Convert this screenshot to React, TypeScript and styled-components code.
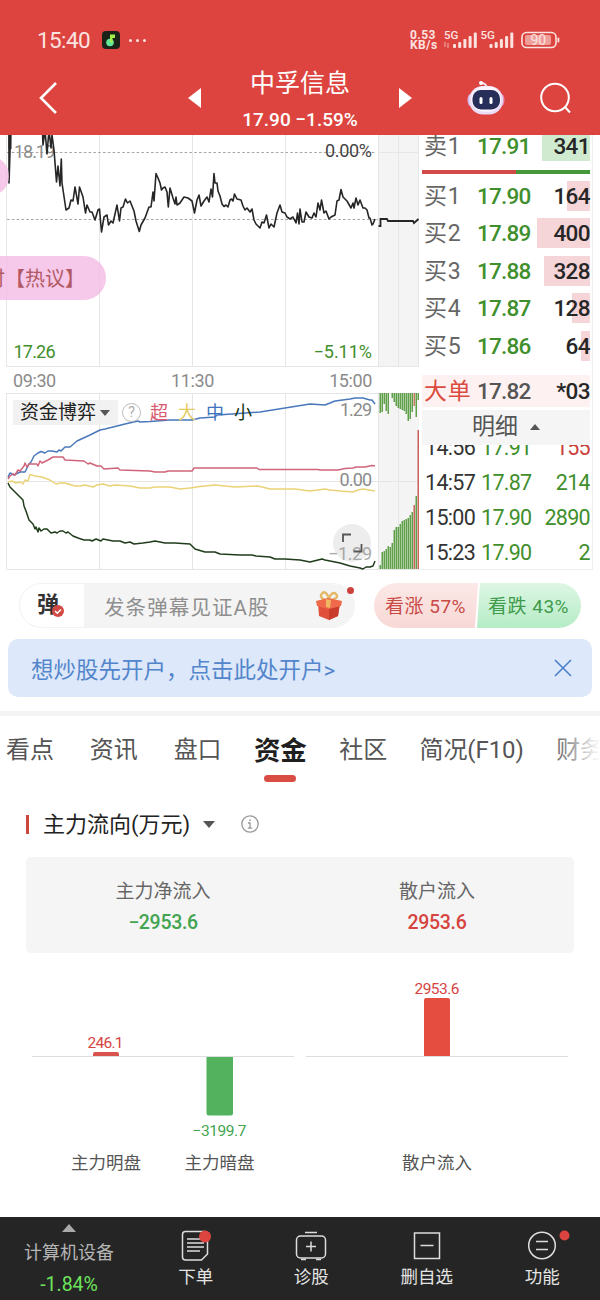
import React from 'react'
import styled, { createGlobalStyle } from 'styled-components'

const font = `Roboto, 'Noto Sans CJK SC', sans-serif`

const red = '#dd4440'
const up = '#d5443f'
const down = '#3f8f2c'

const pricePoints = '9,120 9,183 11,120 42,120 43,145 45,130 47,154 49,130 51,148 52,135 54,150 56.5,182 58,166 60,186 61.3,159 62,183 66,210 69,208 71,200 73,201 75,187 78,204 79.5,187 83,197 85.5,213 87,205 90,212 92,212 95,220 98,210 99.5,209 101.5,232 104,217 107,215 108.5,225 111,221 113,223 117,205 119.5,221 121,208 123,207 125.5,199 127.5,203 130,201 134,211 136,221 139.3,231.5 141,225 145,218 149,207 151,207 153,192 154,201 156,173.5 158,178 160,183 161.5,190 163,188 165,187 167,192 168.3,207 170,188 173,198 175,204 176,197 177,205 180,203 184,197 188,198 192,201 194.5,213 197,200 199,195 201,206 204,201 207,197 209,202 211,189 212.5,197 214,173.5 215,183 217,183 218,191 220,196 222,204 224,206.5 226,205 228,207 230,200 231.5,199 233,201 234.5,194 237,199 241,200 243,206 245,210 247,208 250,212 252,209 254,220 256,224 260,228 262,222 264,223 266.5,215 269,228 271,224 274,227 277,213 280,205 282,212 285,213 287,217 290,219 293,217 296,223 297.5,213 299,224 300,209 302,222 304,222 306,212 309,217 312,218 314,213 316,217 318,203 320,210 321.5,200 324,213 326,211 329,219 331,217 335,215 337,201 339,200 341,189.5 343,197 347,201 351,208 353,203 354,208 356,198 358,205 360,200 363,208 365,208 367,210 369,218 370,218 372,225 373,224 375,219'

const afterPoints = '378.5,226 380.5,226 380.5,219 387,219 388,221 413,221 414,223 418.5,219'

const flowLines = [
  { color: '#4a78bd', points: '8,477 10,473 14,475 20,472 25,472 29,464 31,462 34,456 38,453 41,451.5 45,453 48,451 52,451 57,452 59,450 61,451 65,447 70,447 77,441 90,435 100,430 105,429 113,427 125,424 138,421 140,422 150,421.5 170,420 192,420 200,418 215,417 217,415 232,414 260,412 285,408 310,404 325,405 335,401 350,399 355,398 363,398 370,400 372,400 375,404' },
  { color: '#d0647a', points: '8,479 10,476 13,474 15,475 18,470 20,471 24,466 25,463 27,467 29,464 37,464 38,466 40,461 42,463 48,460 53,457 63,457 65,460 84,461 88,464 90,463 97,466 101,466 104,469 118,468 120,470 150,471 155,472 165,472 168,471 192,471 194,468 257,468 259,469.5 318,469.5 320,470 338,470 345,468.5 353,468 356,467 365,467 372,465.5 375,466' },
  { color: '#ead277', points: '8,482 12,481 16,483 20,482 23,484 25,480 28,481 30,474.5 35,476 42,477 50,480 56,484 60,483 65,483 75,486 80,486 85,485 93,487 97,485 103,484 110,486 115,485 130,486 140,488 150,488 155,487 170,487 180,489 190,488 200,486.5 215,485 235,487 258,486 270,489 295,489 310,491 325,489 330,490 340,491 353,492 358,490 363,489 375,491' },
  { color: '#1f3d1a', points: '8,483 10,487 13,490 17,494 23,500 24,506 26,511 29,520 33,524 35,529 36,527 38,532 39,528 41,531 44,529 47,529 51,533 55,532 57,533 60,531 63,531 66,533 68,532 73,536 78,538 84,540 90,540 92,541 96,539 101,541 103,539 113,541 120,541 125,543 130,542 134,544 143,543 150,542 155,541 165,543 175,543 190,544 195,549 205,552 215,552 220,554 240,555 252,555 256,556 270,557 275,559 285,559 300,560 310,562 322,559 325,560 340,563 350,566 355,567 360,568 363,569 366,567 370,567 373,566 375,561' },
]

const topBars = [413, 412, 404, 411, 414, 0, 398, 402, 406, 408, 409, 410, 411, 414, 421, 419, 412, 406, 417, 400]
const bottomBars = [565, 552, 551, 549, 546, 547, 543, 530, 527, 527, 524, 521, 520, 519, 518, 515, 512, 505, 496, 430]

const bids = [
  { name: '买1', price: '17.90', volume: '164', bar: 23 },
  { name: '买2', price: '17.89', volume: '400', bar: 56 },
  { name: '买3', price: '17.88', volume: '328', bar: 46 },
  { name: '买4', price: '17.87', volume: '128', bar: 18 },
  { name: '买5', price: '17.86', volume: '64', bar: 9 },
]

const deals = [
  { time: '14:56', price: '17.91', volume: '155', rise: true },
  { time: '14:57', price: '17.87', volume: '214' },
  { time: '15:00', price: '17.90', volume: '2890' },
  { time: '15:23', price: '17.90', volume: '2' },
]

const tabs = ['看点', '资讯', '盘口', '资金', '社区', '简况(F10)', '财务']

const StatusIcons = () => (
  <svg width="118" height="28" viewBox="443 26 118 28" fill="#fbe3e0">
    <text x="444" y="38.500" fontSize="11.500" fontWeight="500">5G</text>
    <text x="480.500" y="38.500" fontSize="11.500" fontWeight="500">5G</text>
    <path d="M445 42v5M448 43v5" stroke="#eda19d" strokeWidth="1.200" />
    {[4, 6, 9, 12, 15.5].map((h, i) => (
      <React.Fragment key={h}>
        <rect x={453 + i * 5.2} y={48 - h} width="3" height={h} rx="1" />
        <rect x={489.5 + i * 5.2} y={48 - h} width="3" height={h} rx="1" />
      </React.Fragment>
    ))}
    <rect x="522" y="32.500" width="34" height="15" rx="4.500" fill="none" stroke="#fbe3e0" strokeWidth="1.600" />
    <rect x="525" y="35" width="26" height="10" rx="2" fill="#ef9f9a" />
    <rect x="557.500" y="37.500" width="1.800" height="5" rx="1" />
    <text x="530.500" y="45" fontSize="14">90</text>
  </svg>
)

const Robot = () => (
  <svg width="40" height="38" viewBox="466 78 40 38">
    <path d="M481 82q5 0 6 5" fill="none" stroke="#f4dcec" strokeWidth="2" />
    <circle cx="481" cy="82" r="2" fill="#fff" />
    <ellipse cx="470.500" cy="99" rx="3" ry="6" fill="#d3b5ee" />
    <ellipse cx="501.500" cy="99" rx="3" ry="6" fill="#e58fb4" />
    <rect x="469" y="85" width="34" height="28.500" rx="14" fill="#eadcf8" />
    <rect x="471" y="85.500" width="30" height="25" rx="12" fill="#fbf5ff" />
    <rect x="472.500" y="89" width="27.500" height="19.500" rx="8.500" fill="#262e59" />
    <rect x="479.500" y="96" width="3" height="7" rx="1.500" fill="#fff" />
    <rect x="489.500" y="96" width="3" height="7" rx="1.500" fill="#fff" />
  </svg>
)

const Gift = () => (
  <svg width="28" height="30" viewBox="0 0 28 30">
    <path d="M13 9C8 9 4 6 7 2.500S13 4 14 8c1-4 4-8 7-5s-1 6-7 6z" fill="none" stroke="#e2b765" strokeWidth="2.400" />
    <path d="M3 12l11 4 11-4-2 13-9 4-10-4z" fill="#e0503a" />
    <path d="M14 16l11-4-2 13-9 4z" fill="#c93b2b" />
    <path d="M1 10l12-3 14 3-1 5-12 3L2 15z" fill="#ee6a4a" />
    <path d="M11 8l5 1-1 8-4-1z" fill="#f0b763" />
  </svg>
)

const PriceChart = () => (
  <Chart width="420" height="232" viewBox="0 135 420 232">
    <rect x="378" y="135" width="41" height="231" fill="#f4f4f4" />
    <path d="M6.500 135v231.500H418.500V135M99.500 135v231M192.500 135v231M285.500 135v231M378.500 135v231M398.500 135v231" fill="none" stroke="#e6e6e6" />
    <path d="M378 152.500H419" stroke="#e6e6e6" />
    <path d="M7 152.500H375M7 219.500H378" stroke="#aaa59e" strokeDasharray="2.600 2.200" />
    <text x="14" y="157.500" textLength="41" fill="#8b8b8b">18.19</text>
    <text x="325" y="157" textLength="47" fill="#444">0.00%</text>
    <text x="13.500" y="357.500" textLength="42" fill={down}>17.26</text>
    <text x="313.500" y="357.500" textLength="58.500" fill={down}>−5.11%</text>
    <path d="M10 135v14" stroke="#222" strokeWidth="3" />
    <polyline points={pricePoints} fill="none" stroke="#262626" strokeWidth="1.600" strokeLinejoin="round" />
    <polyline points={afterPoints} fill="none" stroke="#262626" strokeWidth="1.800" />
  </Chart>
)

const FlowChart = () => (
  <Chart width="420" height="177" viewBox="0 393 420 177">
    <rect x="378" y="393" width="41" height="176" fill="#f4f4f4" />
    <path d="M6.500 393.500H419M6.500 569.500H419M6.500 481.500H419M6.500 393v176M99.500 393v176M192.500 393v176M285.500 393v176M378.500 393v176M398.500 393v176" fill="none" stroke="#e6e6e6" />
    {topBars.map((y, i) => y > 0 && (
      <rect key={i} x={379.5 + i * 2} y="393" width="1.500" height={y - 393} fill={i === 17 ? '#c9765c' : '#5f9f48'} />
    ))}
    {bottomBars.map((y, i) => (
      <rect key={i} x={379.5 + i * 2} y={y} width="1.500" height={569 - y} fill={i === 17 || i === 19 ? '#c86157' : '#5f9f48'} />
    ))}
    <text x="340" y="416" textLength="32" fill="#8b8b8b">1.29</text>
    <text x="339.500" y="486" textLength="32.500" fill="#8b8b8b">0.00</text>
    {flowLines.map((line) => (
      <polyline key={line.color} points={line.points} fill="none" stroke={line.color} strokeWidth="1.500" strokeLinejoin="round" />
    ))}
    <circle cx="352" cy="543" r="19" fill="#ebebeb" fillOpacity=".88" />
    <text x="328" y="559.500" textLength="44" fill="#a8a8a8">−1.29</text>
    <path d="M343 542v-7.500h8M353.500 551.500h8V544" fill="none" stroke="#555" strokeWidth="1.800" />
  </Chart>
)

const MoneyChart = () => (
  <MoneySvg width="600" height="264" viewBox="0 953 600 264" textAnchor="middle">
    <path d="M32 1056.500H294M306 1056.500H568" stroke="#dedede" />
    <path d="M93 1056v-2q0-2 2-2h22q2 0 2 2v2z" fill="#d9544c" />
    <path d="M206.500 1057h26.500v56q0 2.500-2.500 2.500h-21.500q-2.500 0-2.500-2.500z" fill="#52b25d" />
    <path d="M424 1056v-56q0-2 2-2h22q2 0 2 2v56z" fill="#e54d40" />
    <text x="105.500" y="1047.500" textLength="36" fontSize="15.500" fill={up}>246.1</text>
    <text x="219.500" y="1135.500" textLength="54" fontSize="15.500" fill="#43a450">−3199.7</text>
    <text x="437" y="994" textLength="45" fontSize="15.500" fill={up}>2953.6</text>
    <text x="106" y="1168.500" fontSize="17.500" fill="#555">主力明盘</text>
    <text x="219.500" y="1168.500" fontSize="17.500" fill="#555">主力暗盘</text>
    <text x="437" y="1168.500" fontSize="17.500" fill="#555">散户流入</text>
  </MoneySvg>
)

const App = () => {
  return (
    <Page>
      <GlobalStyle />
      <Header>
        <StatusBar>
          <Clock>15:40</Clock>
          <svg width="18" height="18" viewBox="0 0 18 18">
            <rect width="18" height="18" rx="4" fill="#1b2319" />
            <circle cx="8" cy="11.500" r="3.800" fill="#62e79a" />
            <path d="M8 11V3.500h5v3.500h-2.500v5z" fill="#a6f04c" />
          </svg>
          <Dots><i /><i /><i /></Dots>
          <Speed>0.53<br />KB/s</Speed>
          <StatusIcons />
        </StatusBar>
        <NavBar>
          <svg width="20" height="34" viewBox="0 0 20 34">
            <path d="M18 2L3 17l15 15" fill="none" stroke="#fff" strokeWidth="2.600" />
          </svg>
          <Stock>
            <svg width="13" height="20" viewBox="0 0 13 20"><path d="M13 0v20L0 10z" fill="#fff" /></svg>
            <StockName>
              <h1>中孚信息</h1>
              <p>17.90 −1.59%</p>
            </StockName>
            <svg width="13" height="20" viewBox="0 0 13 20"><path d="M0 0v20l13-10z" fill="#fff" /></svg>
          </Stock>
          <Tools>
            <Robot />
            <svg width="32" height="32" viewBox="0 0 32 32" fill="none" stroke="#fff" strokeWidth="2">
              <circle cx="15" cy="15.500" r="13.800" />
              <path d="M25 25l5 5.500" />
            </svg>
          </Tools>
        </NavBar>
      </Header>

      <Quote>
        <Charts>
          <PriceChart />
          <Bubble $top={21} $height={40} $right={9} />
          <Bubble $top={121} $height={44} $right={106}>时【热议】</Bubble>
          <TimeAxis>
            <span>09:30</span>
            <span>11:30</span>
            <span>15:00</span>
          </TimeAxis>
          <FlowChart />
          <Legend>
            <LegendSelect>资金博弈<Caret $size={5} /></LegendSelect>
            <Help>?</Help>
            <LegendItem $color="#d95b70">超</LegendItem>
            <LegendItem $color="#e6cb62">大</LegendItem>
            <LegendItem $color="#3f72bf">中</LegendItem>
            <LegendItem $color="#18350f">小</LegendItem>
          </Legend>
        </Charts>

        <Book>
          <AskRow>
            <OrderName>卖1</OrderName>
            <OrderPrice>17.91</OrderPrice>
            <Volume $bar={48} $color="#cfeace">341</Volume>
          </AskRow>
          <Ratio><i /></Ratio>
          {bids.map((bid) => (
            <OrderRow key={bid.name}>
              <OrderName>{bid.name}</OrderName>
              <OrderPrice>{bid.price}</OrderPrice>
              <Volume $bar={bid.bar} $color="#f5d5d7">{bid.volume}</Volume>
            </OrderRow>
          ))}
          <BigOrder>
            <OrderName $color="#dc4b40">大单</OrderName>
            <OrderPrice $color="#555">17.82</OrderPrice>
            <Volume>*03</Volume>
          </BigOrder>
          <Detail>明细<Caret $up $size={5} /></Detail>
          <Deals>
            {deals.map((deal) => (
              <Deal key={deal.time}>
                <DealTime>{deal.time}</DealTime>
                <DealPrice>{deal.price}</DealPrice>
                <DealVolume $rise={deal.rise}>{deal.volume}</DealVolume>
              </Deal>
            ))}
          </Deals>
        </Book>
      </Quote>

      <Social>
        <Danmu>
          <DanmuSwitch>
            弹
            <svg width="12" height="12" viewBox="0 0 12 12">
              <circle cx="6" cy="6" r="6" fill="#d24a43" />
              <path d="M3 6l2.300 2.300L9 4.500" fill="none" stroke="#fff" strokeWidth="1.500" />
            </svg>
          </DanmuSwitch>
          <DanmuInput>
            发条弹幕见证A股
            <Gift />
          </DanmuInput>
          <DanmuDot />
        </Danmu>
        <Vote>
          <Rise>看涨 57%</Rise>
          <Fall>看跌 43%</Fall>
        </Vote>
      </Social>

      <Banner>
        想炒股先开户，点击此处开户&gt;
        <svg width="18" height="18" viewBox="0 0 18 18">
          <path d="M1 1l16 16M17 1L1 17" stroke="#4b7fc9" strokeWidth="1.600" />
        </svg>
      </Banner>

      <Tabs>
        {tabs.map((tab) => <Tab key={tab} $active={tab === '资金'}>{tab}</Tab>)}
      </Tabs>

      <Title>
        主力流向(万元)
        <Caret $size={6} />
        <svg width="18" height="18" viewBox="0 0 18 18" fill="none" stroke="#999" strokeWidth="1.300">
          <circle cx="9" cy="9" r="8.200" />
          <path d="M9 4.200v2M7 8h2v5M6.800 13.200h4.400" />
        </svg>
      </Title>

      <Summary>
        <SummaryItem $color="#43a450">主力净流入<b>−2953.6</b></SummaryItem>
        <SummaryItem $color={up}>散户流入<b>2953.6</b></SummaryItem>
      </Summary>

      <MoneyChart />

      <BottomBar>
        <Sector>
          <Caret $up $size={7} $color="#aaa" />
          <span>计算机设备</span>
          <b>-1.84%</b>
        </Sector>
        <Action>
          <svg width="30" height="32" viewBox="0 0 30 32" fill="none" stroke="#ddd" strokeWidth="1.500">
            <path d="M4.500 1.500h19q3 0 3 3V24l-6 6h-16q-3 0-3-3V4.500q0-3 3-3z" />
            <path d="M6 9h17M6 13h17M6 17h17M6 21h13" />
            <circle cx="24" cy="6.500" r="6" fill={red} stroke="none" />
          </svg>
          下单
        </Action>
        <Action>
          <svg width="32" height="32" viewBox="0 0 32 32" fill="none" stroke="#ddd" strokeWidth="1.500">
            <rect x="1.500" y="6" width="29" height="22" rx="4" />
            <path d="M10 2.500h12M16 11.500v10M11 16.500h10M6 29.500h5M21 29.500h5" />
          </svg>
          诊股
        </Action>
        <Action>
          <svg width="32" height="32" viewBox="0 0 32 32" fill="none" stroke="#ddd" strokeWidth="1.500">
            <rect x="3.500" y="3" width="25" height="25.500" />
            <path d="M9.500 15.500h13" />
          </svg>
          删自选
        </Action>
        <Action>
          <svg width="60" height="32" viewBox="0 0 60 32" fill="none" stroke="#ddd" strokeWidth="1.500">
            <circle cx="30" cy="15.500" r="13.300" />
            <path d="M24 11.500h12M24 19.500h12" />
            <circle cx="52.500" cy="5.500" r="5" fill={red} stroke="none" />
          </svg>
          功能
        </Action>
      </BottomBar>
    </Page>
  )
}

export default App

const GlobalStyle = createGlobalStyle`
  * {
    box-sizing: border-box;
  }
  body {
    margin: 0;
    background: #fff;
  }
  svg {
    display: block;
    flex: none;
  }
`
const Page = styled.div`
  width: 600px;
  height: 1300px;
  overflow: hidden;
  font-family: ${font};
  color: #222;
  white-space: nowrap;
`
const Header = styled.header`
  height: 135px;
  padding-top: 24px;
  background: ${red};
  color: #fff;
`
const StatusBar = styled.div`
  display: flex;
  align-items: center;
  height: 32px;
  padding-left: 37px;
  color: #fbe3e0;
`
const Clock = styled.span`
  width: 65px;
  font-size: 22.5px;
  letter-spacing: -0.6px;
`
const Dots = styled.span`
  display: flex;
  gap: 4px;
  width: 282px;
  padding-left: 9px;
  i {
    width: 3px;
    height: 3px;
    border-radius: 50%;
    background: #fbe3e0;
  }
`
const Speed = styled.span`
  width: 33px;
  margin-left: 8px;
  font-size: 12px;
  line-height: 10.5px;
  font-weight: 700;
  letter-spacing: 0.4px;
`
const NavBar = styled.nav`
  display: flex;
  align-items: center;
  height: 79px;
  padding: 4px 28px 0 38px;
`
const Stock = styled.div`
  display: flex;
  align-items: center;
  justify-content: space-between;
  width: 224px;
  margin: 0 54px 0 130px;
`
const StockName = styled.div`
  text-align: center;
  h1 {
    margin: 0;
    font-size: 25px;
    line-height: 43px;
    font-weight: 400;
  }
  p {
    margin: 0;
    font-size: 19px;
    line-height: 29px;
    font-weight: 500;
  }
`
const Tools = styled.div`
  display: flex;
  align-items: center;
  gap: 34px;
`
const Quote = styled.section`
  display: flex;
  height: 435px;
`
const Charts = styled.div`
  position: relative;
  width: 420px;
  overflow: hidden;
`
const Chart = styled.svg`
  font-family: ${font};
  font-size: 18px;
`
const Bubble = styled.div<{ $top: number, $height: number, $right: number }>`
  position: absolute;
  top: ${({ $top }) => $top}px;
  left: -60px;
  width: ${({ $right }) => $right + 60}px;
  height: ${({ $height }) => $height}px;
  padding-right: 21px;
  border-radius: 22px;
  background: rgba(243, 185, 228, 0.78);
  color: #b25a64;
  font-size: 20px;
  line-height: ${({ $height }) => $height + 2}px;
  text-align: right;
`
const TimeAxis = styled.div`
  display: flex;
  justify-content: space-between;
  height: 26px;
  padding: 0 48px 0 13px;
  color: #8b8b8b;
  font-size: 18px;
  line-height: 28px;
  letter-spacing: -0.4px;
`
const Legend = styled.div`
  position: absolute;
  top: 265px;
  left: 13px;
  display: flex;
  align-items: center;
  height: 25px;
`
const LegendSelect = styled.div`
  display: flex;
  align-items: center;
  justify-content: space-between;
  width: 105px;
  height: 25px;
  padding: 0 8px 0 7px;
  background: rgba(240, 240, 240, 0.9);
  font-size: 19px;
  line-height: 27px;
`
const Help = styled.span`
  width: 19px;
  height: 19px;
  margin: 0 9px 0 4px;
  border: 1.5px solid #bbb;
  border-radius: 50%;
  color: #aaa;
  font-size: 14px;
  line-height: 17px;
  text-align: center;
`
const LegendItem = styled.span<{ $color: string }>`
  width: 28px;
  color: ${({ $color }) => $color};
  font-size: 18px;
  line-height: 25px;
`
const Caret = styled.i<{ $size: number, $up?: boolean, $color?: string }>`
  border: ${({ $size }) => $size}px solid transparent;
  border-${({ $up }) => $up ? 'bottom' : 'top'}: ${({ $size }) => $size + 1}px solid ${({ $color }) => $color || '#555'};
  border-${({ $up }) => $up ? 'top' : 'bottom'}: 0;
`
const Book = styled.div`
  width: 173px;
  padding: 0 2px;
  border-right: 1px solid #eee;
  border-bottom: 1px solid #eee;
  overflow: hidden;
`
const OrderRow = styled.div`
  display: flex;
  align-items: center;
  height: 37.5px;
  padding-left: 2px;
`
const AskRow = styled(OrderRow)`
  margin-top: -8px;
  height: 38px;
`
const OrderName = styled.span<{ $color?: string }>`
  width: 53px;
  padding-top: 2px;
  color: ${({ $color }) => $color || '#666'};
  font-size: 23px;
  line-height: 34px;
  letter-spacing: 0.8px;
`
const OrderPrice = styled.span<{ $color?: string }>`
  width: 60px;
  color: ${({ $color }) => $color || down};
  font-size: 22.5px;
  font-weight: 500;
  letter-spacing: -0.8px;
`
const Volume = styled.span<{ $bar?: number, $color?: string }>`
  flex: 1;
  height: 30px;
  background: linear-gradient(${({ $color }) => $color || 'transparent'}, ${({ $color }) => $color || 'transparent'}) right / ${({ $bar }) => $bar || 0}px 100% no-repeat;
  color: #262626;
  font-size: 22.5px;
  font-weight: 500;
  line-height: 31px;
  letter-spacing: -0.6px;
  text-align: right;
`
const Ratio = styled.div`
  height: 4px;
  margin: 5px 0 3px;
  background: #45993a;
  i {
    display: block;
    width: 94px;
    height: 4px;
    background: #cf4a49;
  }
`
const BigOrder = styled(OrderRow)`
  height: 32px;
  margin-top: 10px;
  background: #fdf1f1;
`
const Detail = styled.div`
  display: flex;
  align-items: center;
  justify-content: center;
  gap: 12px;
  height: 35px;
  margin-top: 3px;
  background: #f5f5f5;
  color: #555;
  font-size: 23px;
  line-height: 36px;
`
const Deals = styled.div`
  height: 124px;
  overflow: hidden;
`
const Deal = styled.div`
  display: flex;
  height: 35.3px;
  padding-left: 3px;
  font-size: 21.5px;
  line-height: 35.3px;
  letter-spacing: -0.7px;
  &:first-child {
    margin-top: -15px;
  }
`
const DealTime = styled.span`
  width: 56px;
  color: #333;
`
const DealPrice = styled.span`
  width: 56px;
  color: ${down};
`
const DealVolume = styled.span<{ $rise?: boolean }>`
  flex: 1;
  color: ${({ $rise }) => $rise ? '#c9403c' : down};
  text-align: right;
`
const Social = styled.div`
  display: flex;
  align-items: center;
  justify-content: space-between;
  height: 45px;
  margin: 13px 19px 11px;
`
const Danmu = styled.div`
  position: relative;
  display: flex;
  width: 336px;
  height: 45px;
  border: 1px solid #f2f2f2;
  border-radius: 23px;
`
const DanmuSwitch = styled.div`
  position: relative;
  width: 64px;
  padding-left: 17px;
  color: #333;
  font-size: 22px;
  line-height: 41px;
  font-weight: 700;
  svg {
    position: absolute;
    left: 32px;
    top: 21px;
  }
`
const DanmuInput = styled.div`
  flex: 1;
  display: flex;
  align-items: center;
  justify-content: space-between;
  padding: 0 11px 0 20px;
  border-radius: 0 23px 23px 0;
  background: #f4f4f4;
  color: #8f8f8f;
  font-size: 20.5px;
  letter-spacing: 1.1px;
`
const DanmuDot = styled.i`
  position: absolute;
  right: 0;
  top: 3px;
  width: 7px;
  height: 7px;
  border-radius: 50%;
  background: #cc423e;
`
const Vote = styled.div`
  display: flex;
  width: 207px;
  height: 45px;
  border-radius: 23px;
  overflow: hidden;
  font-size: 19px;
  line-height: 47px;
  letter-spacing: 0.5px;
`
const Rise = styled.div`
  width: 104px;
  padding-left: 11px;
  background: linear-gradient(#fbe9e7, #f8d8d6);
  clip-path: polygon(0 0, 100% 0, calc(100% - 3px) 100%, 0 100%);
  color: #c94b46;
`
const Fall = styled.div`
  width: 104px;
  margin-left: -1px;
  padding-left: 11px;
  background: linear-gradient(#ddf6e4, #b5ecc6);
  clip-path: polygon(3px 0, 100% 0, 100% 100%, 0 100%);
  color: #3f9b4b;
`
const Banner = styled.div`
  display: flex;
  align-items: center;
  justify-content: space-between;
  height: 58px;
  margin: 0 8px 14px;
  padding: 0 20px 0 23px;
  border-radius: 10px;
  background: #dde8fa;
  color: #5285cb;
  font-size: 22.5px;
`
const Tabs = styled.div`
  position: relative;
  display: flex;
  gap: 32.5px;
  height: 78px;
  padding-left: 6px;
  border-top: 5px solid #f4f4f4;
  overflow: hidden;
  &::after {
    content: '';
    position: absolute;
    top: 0;
    right: 0;
    width: 50px;
    height: 70px;
    background: linear-gradient(90deg, rgba(255, 255, 255, 0), #fff);
  }
`
const Tab = styled.div<{ $active?: boolean }>`
  flex: none;
  color: ${({ $active }) => $active ? '#1f1f1f' : '#555'};
  font-size: ${({ $active }) => $active ? 26.5 : 24}px;
  font-weight: ${({ $active }) => $active ? 700 : 400};
  line-height: 69px;
  letter-spacing: -0.1px;
  &:nth-child(-n + 2) {
    margin-right: 3.5px;
  }
  ${({ $active }) => $active && `
    &::after {
      content: '';
      display: block;
      width: 32px;
      height: 7px;
      margin: -10px auto 0;
      border-radius: 4px;
      background: #d84c41;
    }
  `}
`
const Title = styled.div`
  display: flex;
  align-items: center;
  height: 32px;
  margin: 19px 26px 0;
  font-size: 22px;
  line-height: 35px;
  &::before {
    content: '';
    width: 3px;
    height: 19px;
    margin-right: 14px;
    background: #cc4640;
  }
  i {
    margin: 0 26px 0 13px;
  }
`
const Summary = styled.div`
  display: grid;
  grid-template-columns: 1fr 1fr;
  height: 96px;
  margin: 17px 26px 0;
  padding-top: 18px;
  border-radius: 5px;
  background: #f5f5f5;
`
const SummaryItem = styled.div<{ $color: string }>`
  color: #666;
  font-size: 19px;
  line-height: 34px;
  text-align: center;
  b {
    display: block;
    color: ${({ $color }) => $color};
    font-size: 19.5px;
    font-weight: 500;
    line-height: 27px;
    letter-spacing: -0.3px;
  }
`
const MoneySvg = styled.svg`
  font-family: ${font};
`
const BottomBar = styled.footer`
  display: grid;
  grid-template-columns: 138px repeat(4, 1fr);
  height: 83px;
  background: #252525;
  color: #e4e4e4;
`
const Sector = styled.div`
  display: flex;
  flex-direction: column;
  align-items: center;
  padding-top: 7px;
  color: #b5b5b5;
  font-size: 18px;
  line-height: 42px;
  b {
    margin-top: -10px;
    color: #6de45c;
    font-size: 19.5px;
    font-weight: 400;
  }
`
const Action = styled.div`
  display: flex;
  flex-direction: column;
  align-items: center;
  padding-top: 13px;
  font-size: 17.5px;
  line-height: 30px;
`
